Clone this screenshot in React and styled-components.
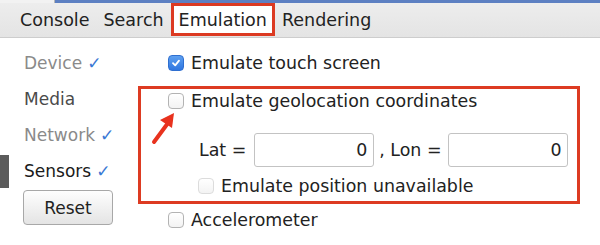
import React from "react";
import styled, { createGlobalStyle } from "styled-components";

const Global = createGlobalStyle`
  html, body { margin: 0; padding: 0; background: #fff; }
  body { font-family: "DejaVu Sans", "Liberation Sans", sans-serif; color: #222; }
`;

const Page = styled.div`
  width: 600px;
  height: 245px;
  overflow: hidden;
  display: flex;
  flex-direction: column;
  background: #fff;
`;

const TopStrip = styled.div`
  display: flex;
  height: 3px;
`;
const StripPart = styled.div`
  width: ${(p) => (p.$w ? p.$w + "px" : "auto")};
  flex: ${(p) => (p.$w ? "none" : "1")};
  background: ${(p) => p.$bg};
  border-right: ${(p) => (p.$w ? "1px solid #b8b8b8" : "none")};
`;

const TabBar = styled.div`
  display: flex;
  align-items: stretch;
  height: 34px;
  padding-left: 13px;
  background: linear-gradient(#ededed, #e4e4e4);
  border-bottom: 1px solid #cdcdcd;
`;

const Tab = styled.div`
  display: flex;
  align-items: center;
  padding: 0 7px;
  font-size: 17.5px;
  color: #222;
  box-sizing: border-box;
  ${(p) =>
    p.$active &&
    `
    background: #fff;
    border: 3px solid #dc3a22;
    padding: 0 5px;
    height: 33px;
  `}
`;

const Body = styled.div`
  display: flex;
  flex: 1;
`;

const Sidebar = styled.div`
  width: 138px;
  flex: none;
  padding-top: 7px;
  display: flex;
  flex-direction: column;
`;

const NavItem = styled.div`
  position: relative;
  height: 36px;
  display: flex;
  align-items: center;
  padding-left: 24px;
  font-size: 17px;
  color: ${(p) => p.$color};
  &::before {
    content: "";
    display: ${(p) => (p.$selected ? "block" : "none")};
    position: absolute;
    left: 0;
    top: 2px;
    width: 9px;
    height: 33px;
    background: #5b5b5b;
  }
`;

const Check = styled.span`
  color: #3a78d4;
  margin-left: 5px;
  font-size: 17px;
  font-weight: bold;
`;

const ResetButton = styled.button`
  margin: 1px 0 0 23px;
  width: 90px;
  height: 35px;
  font-family: inherit;
  font-size: 17px;
  color: #222;
  background: linear-gradient(#fefefe, #e4e4e4);
  border: 1px solid #a8a8a8;
  border-radius: 4px;
  padding: 0;
`;

const Main = styled.div`
  flex: 1;
  padding-top: 12px;
  display: flex;
  flex-direction: column;
  position: relative;
`;

const Row = styled.div`
  display: flex;
  align-items: center;
  height: ${(p) => p.$h || 26}px;
  padding-left: ${(p) => p.$indent}px;
  margin-top: ${(p) => p.$mt || 0}px;
  font-size: 17.4px;
  color: #222;
`;

const Box = styled.div`
  width: 442px;
  box-sizing: border-box;
  margin-top: 10px;
  border: 3px solid #dd3b22;
  padding-bottom: 3px;
  display: flex;
  flex-direction: column;
`;

const CheckBox = styled.span`
  width: 16px;
  height: 16px;
  box-sizing: border-box;
  border-radius: 4px;
  margin-right: 7px;
  flex: none;
  display: inline-flex;
  align-items: center;
  justify-content: center;
  border: 1px solid ${(p) => (p.$checked ? "#2f6fd0" : p.$faint ? "#dcdcdc" : "#b3b3b3")};
  background: ${(p) =>
    p.$checked ? "linear-gradient(#5ea0f0, #2f76e0)" : "linear-gradient(#ffffff, #f3f3f3)"};
`;

const Label = styled.span`
  white-space: nowrap;
`;

const Input = styled.div`
  width: 120px;
  height: 34px;
  box-sizing: border-box;
  border: 1px solid #c3c3c3;
  border-radius: 3px;
  display: flex;
  align-items: center;
  justify-content: flex-end;
  padding-right: 6px;
  font-size: 17.4px;
  margin: ${(p) => p.$m};
  background: #fff;
`;

const Arrow = styled.svg`
  position: absolute;
  left: 11px;
  top: 72px;
`;

const Tick = () => (
  <svg width="10" height="10" viewBox="0 0 10 10">
    <path d="M2 5.2 L4.2 7.4 L8 2.6" stroke="#fff" strokeWidth="1.8" fill="none" strokeLinecap="round" strokeLinejoin="round" />
  </svg>
);

export default function App() {
  return (
    <Page>
      <Global />
      <TopStrip>
        <StripPart $w={54} $bg="#f2f2f2" />
        <StripPart $bg="#5d80c2" />
      </TopStrip>
      <TabBar>
        <Tab>Console</Tab>
        <Tab>Search</Tab>
        <Tab $active>Emulation</Tab>
        <Tab>Rendering</Tab>
      </TabBar>
      <Body>
        <Sidebar>
          <NavItem $color="#8a8a8a">
            Device<Check>✓</Check>
          </NavItem>
          <NavItem $color="#4a4a4a">Media</NavItem>
          <NavItem $color="#8a8a8a">
            Network<Check>✓</Check>
          </NavItem>
          <NavItem $color="#1a1a1a" $selected>
            Sensors<Check>✓</Check>
          </NavItem>
          <ResetButton>Reset</ResetButton>
        </Sidebar>
        <Main>
          <Row $indent={30}>
            <CheckBox $checked>
              <Tick />
            </CheckBox>
            <Label>Emulate touch screen</Label>
          </Row>
          <Box>
            <Row $indent={27} $h={24}>
              <CheckBox />
              <Label>Emulate geolocation coordinates</Label>
            </Row>
            <Row $indent={58} $h={34} $mt={20}>
              <Label>Lat =</Label>
              <Input $m="0 5px 0 8px">0</Input>
              <Label>, Lon =</Label>
              <Input $m="0 0 0 7px">0</Input>
            </Row>
            <Row $indent={57} $h={24} $mt={7}>
              <CheckBox $faint />
              <Label>Emulate position unavailable</Label>
            </Row>
          </Box>
          <Row $indent={30} $h={24} $mt={4}>
            <CheckBox />
            <Label>Accelerometer</Label>
          </Row>
          <Arrow width="32" height="36" viewBox="0 0 32 36">
            <path d="M5 32 L19 13" stroke="#e8321e" strokeWidth="4" strokeLinecap="round" />
            <path d="M25 3 L11 10 L23 18 Z" fill="#e8321e" />
          </Arrow>
        </Main>
      </Body>
    </Page>
  );
}
